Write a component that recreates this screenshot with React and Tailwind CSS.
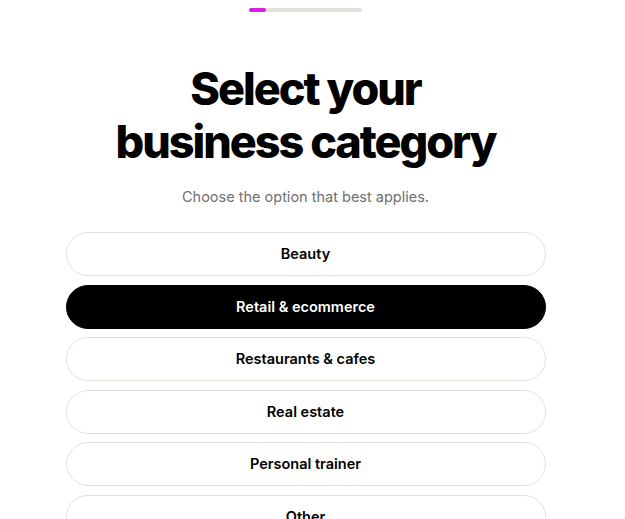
const options = ['Beauty', 'Retail & ecommerce', 'Restaurants & cafes', 'Real estate', 'Personal trainer', 'Other']

export default function App() {
  const selected = 'Retail & ecommerce'

  return (
    <div className="h-[519px] w-[611px] overflow-hidden bg-white" style={{ fontFamily: 'Inter, "Noto Sans", sans-serif' }}>
      <div className="flex flex-col items-center">
        {/* progress */}
        <div className="mt-[8px] h-[4px] w-[113px] rounded-full bg-[#e2e1da]">
          <div className="h-full w-[17px] rounded-full bg-[#d91ce8]" />
        </div>

        <h1 className="mt-[50px] text-center text-[45px] font-extrabold leading-[53px] tracking-[-0.045em] text-black">
          Select your
          <br />
          business category
        </h1>

        <p className="mt-[19px] text-[14.5px] leading-[20px] text-[#6f6f6f]">Choose the option that best applies.</p>

        <div className="mt-[25px] flex w-[480px] flex-col gap-[8.5px]">
          {options.map((opt) => (
            <button
              key={opt}
              className={
                opt === selected
                  ? 'h-[44px] w-full rounded-full border border-black bg-black text-[14.5px] font-semibold text-white'
                  : 'h-[44px] w-full rounded-full border border-[#e2e0d9] bg-white text-[14.5px] font-semibold text-black'
              }
            >
              {opt}
            </button>
          ))}
        </div>
      </div>
    </div>
  )
}
